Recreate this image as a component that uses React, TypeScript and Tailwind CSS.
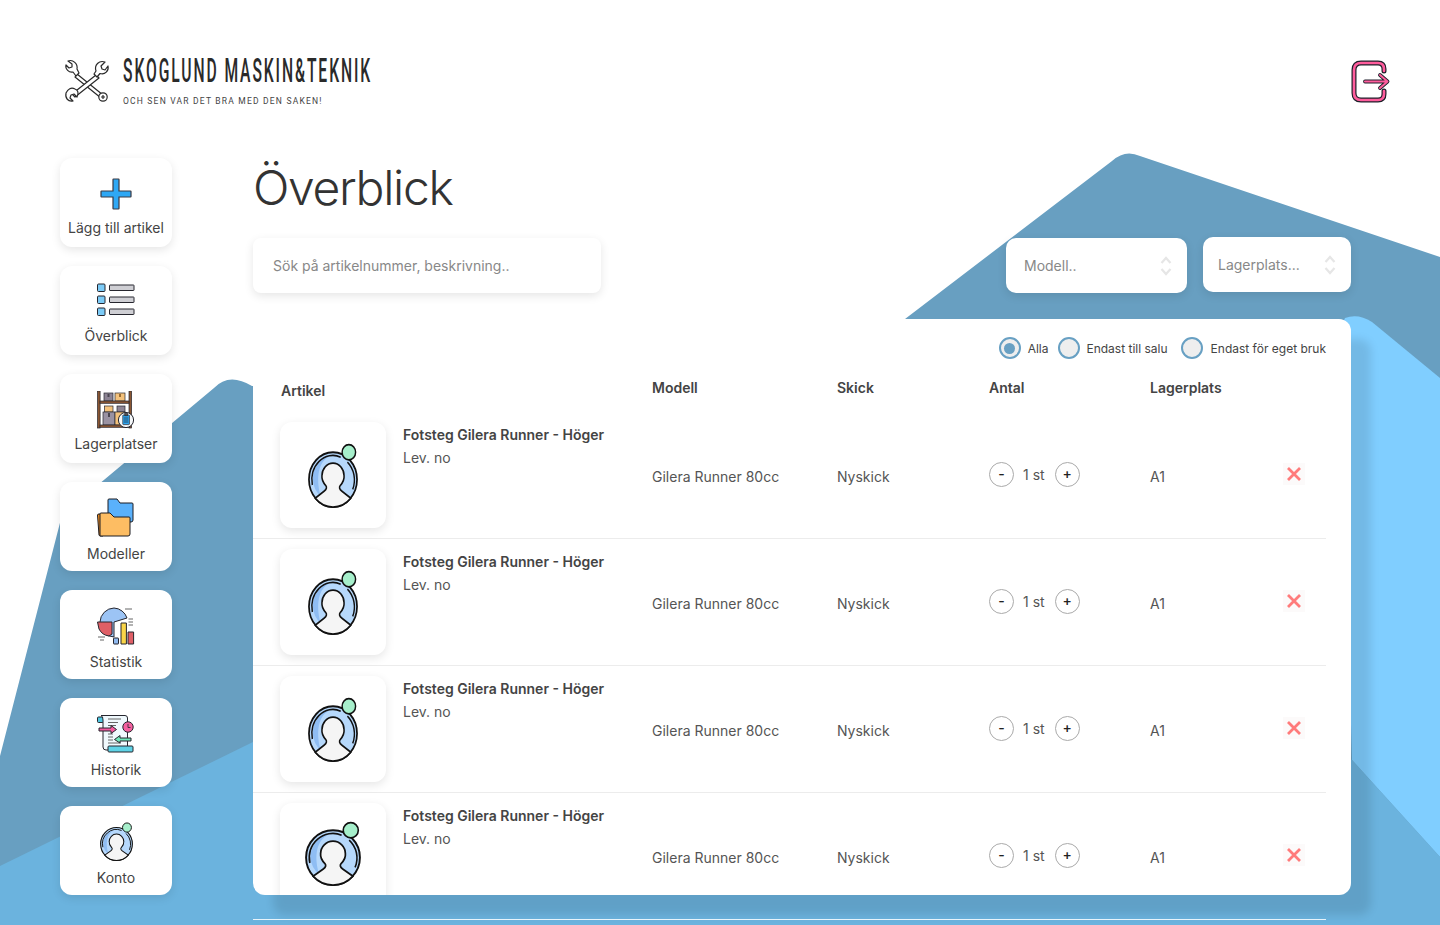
import React from "react";

const INK = "#2a2a2a";

function Background() {
  return (
    <svg className="absolute inset-0 h-[925px] w-[1440px]" viewBox="0 0 1440 925" aria-hidden="true">
      <path d="M0 756 L62 515 L214 388 Q229 372 252 386 L905 387 L905 319 L1112 161 Q1125 149 1140 156 L1440 257 V925 H0 Z" fill="#689fc1" />
      <path d="M1340 330 L1345 318 Q1358 313 1372 322 L1440 378 V857 L1352 760 Z" fill="#80ceff" />
      <path d="M0 866 L253 742 L800 500 L1352 760 L1440 857 V925 H0 Z" fill="#6bb3de" />
    </svg>
  );
}

function LogoMark() {
  return (
    <svg width="46" height="46" viewBox="0 0 46 46" fill="#fff" stroke={INK} strokeWidth="1.2" strokeLinejoin="round">
      <path d="M13 16 L39 37 L37 40 L11 19 Z" />
      <path d="M32 17 L35 20 L11 39 L8 36 Z" />
      <path d="M41 4 L37 8 L38 11 L41 12 L44 8 C45 13 41 17 36 15.5 L33 19 L30 16 L32 13 C30 7 35 2 41 4 Z" />
      <path d="M2 35 C1 40 4 44 9 43 L6 40 L7 37 L10 36 L13 39 C15 35 14 32 11 31 C7 29 4 31 2 35 Z" />
      <path d="M4 3 L8 6 L8 9 L5 10 L2 7 C1 11 5 15 9 14 L12 18 L15 15 L13 11 C14 6 9 1 4 3 Z" />
      <circle cx="39" cy="39" r="4.2" />
      <path d="M37 39 H41 M39 37 V41" />
    </svg>
  );
}

function Logout() {
  const shape = "M34 13 V11 Q34 5 28 5 H11 Q4 5 4 12 V35 Q4 42 11 42 H28 Q34 42 34 36 V33";
  const arrow = "M15 23.5 H37 M30 17 L37.5 23.5 L30 30";
  return (
    <svg width="42" height="46" viewBox="0 0 42 46" fill="none" strokeLinecap="round" strokeLinejoin="round">
      <path d={shape} stroke="#1f1f2a" strokeWidth="5" />
      <path d={arrow} stroke="#1f1f2a" strokeWidth="3.8" />
      <path d={shape} stroke="#ff5c9c" strokeWidth="2.6" />
      <path d={arrow} stroke="#ff5c9c" strokeWidth="2" />
    </svg>
  );
}

function Avatar({ width, height, className }: { width: number; height: number; className?: string }) {
  return (
    <svg width={width} height={height} viewBox="0 0 52 64" preserveAspectRatio="none" className={`block shrink-0 ${className ?? ""}`}>
      <circle cx="26" cy="38" r="25" fill="#b6d8fb" />
      <path d="M5 38 A21 21 0 0 1 22 17 C11 22 8 36 13 53 A21 21 0 0 1 5 38 Z" fill="#8fbdf3" />
      <path d="M4.5 43 A22 22 0 0 1 34 17.5 M41 22 A22 22 0 0 1 46.5 47" fill="none" stroke="#111" strokeWidth="1.5" />
      <circle cx="26" cy="38" r="25" fill="none" stroke="#111" strokeWidth="1.8" />
      <path d="M7.5 55 L17 48.5 Q20.5 46 18.5 43.5 Q14 39 14.5 34.5 A11.5 11.5 0 0 1 37.5 34.5 Q38 39 33.5 43.5 Q31.5 46 35 48.5 L44.5 55 A25 25 0 0 1 7.5 55 Z" fill="#f5f5f5" stroke="#111" strokeWidth="1.6" />
      <circle cx="42.5" cy="13" r="7" fill="#a6efcb" stroke="#111" strokeWidth="1.5" />
    </svg>
  );
}

function IconPlus() {
  return (
    <svg width="38" height="38" viewBox="0 -1 38 38" className="block overflow-visible">
      <path d="M16 3.5 Q16 3 16.5 3 H21.5 Q22 3 22 3.5 V15 H33.5 Q34 15 34 15.5 V20.5 Q34 21 33.5 21 H22 V32.5 Q22 33 21.5 33 H16.5 Q16 33 16 32.5 V21 H4.5 Q4 21 4 20.5 V15.5 Q4 15 4.5 15 H16 Z" fill="#2ea8f5" stroke="#3a3a44" strokeWidth="1.2" />
    </svg>
  );
}

function IconList() {
  const ys = [1, 13, 25];
  return (
    <svg width="38" height="38" viewBox="0 0 38 38" className="block" stroke="#26262e" strokeWidth="1">
      {ys.map((y) => (
        <g key={y}>
          <rect x="0.5" y={y} width="7.5" height="7.5" rx="1" fill="#7ccbf7" />
          <rect x="12.5" y={y + 1} width="24.5" height="5.5" rx="0.5" fill="#cfcfd4" />
        </g>
      ))}
    </svg>
  );
}

function IconShelf() {
  return (
    <svg width="38" height="38" viewBox="0 0 38 38" className="block" stroke="#26262e" strokeWidth="0.7">
      <rect x="7" y="2" width="9" height="8" fill="#8d8494" />
      <rect x="18" y="2" width="10" height="8" fill="#f4c27c" />
      <rect x="7.5" y="15" width="8.5" height="6" fill="#f4c27c" />
      <rect x="20" y="15" width="8" height="6" fill="#8d8494" />
      <rect x="6" y="21" width="12" height="13" fill="#9a92a2" />
      <rect x="18" y="21" width="10" height="13" fill="#f4c27c" />
      <rect x="10.5" y="3" width="2" height="3" fill="#4b4650" stroke="none" />
      <rect x="22" y="3" width="2" height="3" fill="#9a6d32" stroke="none" />
      <rect x="11" y="22" width="2" height="4" fill="#4b4650" stroke="none" />
      <rect x="0.5" y="0" width="2.6" height="37" fill="#8a5632" />
      <rect x="32" y="0" width="2.6" height="37" fill="#8a5632" />
      <rect x="3" y="10" width="29" height="2.3" fill="#8a5632" />
      <rect x="3" y="34" width="29" height="2.3" fill="#8a5632" />
      <circle cx="29" cy="29" r="7.6" fill="#f5f8fa" strokeWidth="1" />
      <rect x="25.8" y="24" width="6.6" height="9.6" rx="0.6" fill="#2ea8f5" />
      <path d="M27 27 H31.2 M27 29 H31.2 M27 31 H31.2" strokeWidth="0.7" />
      <rect x="27.8" y="22.6" width="2.6" height="2.2" fill="#555" />
    </svg>
  );
}

function IconFolder() {
  return (
    <svg width="38" height="38" viewBox="0 0 38 38" className="block overflow-visible" stroke="#1d1d22" strokeWidth="1" strokeLinejoin="round">
      <path d="M11 19 V1 Q11 0 12 0 H20 L23 4 H35 Q36 4 36 5 V21 Q36 23 34 23 H20 Z" fill="#5ab1fb" />
      <path d="M0.5 16 Q0.5 15 2 15 H6 V37 H4 Q2 37 2 36 Z" fill="#f08c1d" />
      <path d="M3 37 V15 Q3 14 4 14 H13 L17 18 H32 Q33 18 33 19 V35 Q33 37 31 37 Z" fill="#fdbd63" />
    </svg>
  );
}

function IconStats() {
  return (
    <svg width="38" height="38" viewBox="0 0 38 38" className="block" stroke="#26262e" strokeWidth="1" strokeLinejoin="round">
      <path d="M17 1 A14.5 14.5 0 0 1 30 11 L17 15 V30 A14.5 14.5 0 0 1 3 15 A14.5 14.5 0 0 1 17 1 Z" fill="#9cc4f5" />
      <path d="M0.5 15 H15 V27 L12 29 A13 13 0 0 1 2 22 Z" fill="#df5f66" />
      <rect x="16.5" y="31" width="5" height="6" rx="0.5" fill="#8fb9ef" />
      <rect x="24" y="16" width="5.4" height="21" fill="#f9d548" />
      <rect x="31" y="25" width="5.6" height="12" fill="#df5f66" />
      <path d="M28 2 H35 M31.5 12 H36 M31.5 15 H36 M31.5 18 H36 M1 30 H8 M3 33 H7" strokeWidth="0.9" fill="none" stroke="#555" />
    </svg>
  );
}

function IconHistory() {
  return (
    <svg width="38" height="38" viewBox="0 -2 38 38" className="block overflow-visible" stroke="#26262e" strokeWidth="1" strokeLinejoin="round">
      <rect x="0.5" y="0" width="6" height="5.5" rx="1" fill="#4fc7e0" />
      <path d="M4 -1.5 H28 Q30.5 -1.5 30.5 1 V33 H9 Q6 33 6 30 V3 Q6 -1 4 -1.5 Z" fill="#f0f9fd" />
      <path d="M11 2 H24 M11 5.5 H21 M11 8.5 H19 M11 17 H16 M11 20 H16 M11 23 H16 M11 26 H24" fill="none" stroke="#555" strokeWidth="0.9" />
      <rect x="11" y="29" width="25" height="6" rx="1" fill="#5fd3e6" />
      <path d="M2 11 H14 V8.5 L19.5 12.5 L14 16.5 V14 H2 Z" fill="#f45a9f" />
      <path d="M34 21 H23 V18.5 L17.5 22.5 L23 26 V24 H34 Z" fill="#6fe7b8" />
      <circle cx="31" cy="10" r="5.2" fill="#f4609f" />
      <path d="M31 7 V10.5 H33.5" fill="none" strokeWidth="0.8" />
    </svg>
  );
}

function IconKonto() {
  return (
    <div className="flex h-[38px] w-[38px] justify-center">
      <Avatar width={33} height={42} className="-mt-[4px]" />
    </div>
  );
}

const navItems = [
  { label: "Lägg till artikel", icon: <IconPlus />, box: "h-[43px]" },
  { label: "Överblick", icon: <IconList />, box: "h-[43px]" },
  { label: "Lagerplatser", icon: <IconShelf />, box: "h-[43px]" },
  { label: "Modeller", icon: <IconFolder />, box: "h-[45px]" },
  { label: "Statistik", icon: <IconStats />, box: "h-[45px]" },
  { label: "Historik", icon: <IconHistory />, box: "h-[45px]" },
  { label: "Konto", icon: <IconKonto />, box: "h-[45px]" },
];

function Chevrons({ className }: { className: string }) {
  return (
    <svg width="12" height="20" viewBox="0 0 12 20" fill="none" stroke="#e6e6e6" strokeWidth="2.2" className={className}>
      <path d="M1.5 7 L6 2 L10.5 7 M1.5 13 L6 18 L10.5 13" />
    </svg>
  );
}

function Radio({ label, checked, className, labelClass }: { label: string; checked?: boolean; className: string; labelClass: string }) {
  return (
    <div className={`flex items-center ${className}`}>
      <span className="flex h-[22px] w-[22px] items-center justify-center rounded-full border-2 border-[#68a0c3] bg-[#eeeeee]">
        {checked && <span className="h-[11px] w-[11px] rounded-full bg-[#68a0c3]" />}
      </span>
      <span className={`mt-[2px] text-xs text-[#444444] ${labelClass}`}>{label}</span>
    </div>
  );
}

function RoundButton({ children }: { children: React.ReactNode }) {
  return (
    <span className="flex h-[25px] w-[25px] items-center justify-center rounded-full border border-[#aaaaaa] pb-[2px] text-sm leading-none font-medium text-[#222222]">
      {children}
    </span>
  );
}

function Row({ large }: { large?: boolean }) {
  return (
    <div className="grid h-[127px] w-[1073px] grid-cols-[123px_249px_185px_152px_161px_133px_22px] border-b border-[#ececec] pl-[27px] text-sm text-[#555555]">
      <div className={`mt-[10px] flex h-[106px] w-[106px] justify-center rounded-xl bg-white shadow-[0_3px_10px_rgba(0,0,0,0.1)] ${large ? "pt-[13px]" : "pt-[16px]"}`}>
        <Avatar width={large ? 56 : 50} height={70} />
      </div>
      <div className="mt-[13px] flex flex-col gap-[3px]">
        <span className="font-semibold text-[#444444]">Fotsteg Gilera Runner - Höger</span>
        <span>Lev. no</span>
      </div>
      <span className="mt-[55px]">Gilera Runner 80cc</span>
      <span className="mt-[55px]">Nyskick</span>
      <div className="mt-[50px] flex h-[25px] items-center">
        <RoundButton>-</RoundButton>
        <span className="ml-[9px] mr-[10px]">1 st</span>
        <RoundButton>+</RoundButton>
      </div>
      <span className="mt-[55px]">A1</span>
      <div className="mt-[51px] flex h-[22px] w-[22px] items-center justify-center bg-[#fcfafa]">
        <svg width="16" height="16" viewBox="0 0 16 16" stroke="#ff7b7b" strokeWidth="2.8" className="block">
          <path d="M2 2 L14 14 M14 2 L2 14" />
        </svg>
      </div>
    </div>
  );
}

export default function App() {
  return (
    <div className="relative h-[925px] w-full overflow-hidden bg-white font-['Inter',sans-serif]">
      <Background />
      <div className="relative">
        <header className="flex h-[158px] items-start justify-between pl-[64px] pr-[48px]">
          <div className="mt-[58px] flex">
            <LogoMark />
            <div className="ml-[13px] font-['Roboto',sans-serif] text-[#2a2a2a]">
              <div className="h-[30px] w-[250px] origin-left scale-x-[0.475] whitespace-nowrap text-[33px] leading-[26px] font-medium tracking-[4.0px]">
                SKOGLUND MASKIN&amp;TEKNIK
              </div>
              <div className="mt-[7px] h-[12px] whitespace-nowrap text-[8.5px] leading-[12px] tracking-[1.2px] text-[#444444]">
                OCH SEN VAR DET BRA MED DEN SAKEN!
              </div>
            </div>
          </div>
          <div className="mt-[58px]">
            <Logout />
          </div>
        </header>

        <div className="flex pl-[60px]">
          <nav className="flex w-[112px] flex-col gap-[19px]">
            {navItems.map((item) => (
              <div
                key={item.label}
                className="flex h-[89px] flex-col items-center rounded-xl bg-white pt-[17px] shadow-[0_3px_10px_rgba(0,0,0,0.1)]"
              >
                <div className={item.box}>{item.icon}</div>
                <span className="whitespace-nowrap text-sm leading-5 text-[#444444]">{item.label}</span>
              </div>
            ))}
          </nav>

          <main className="ml-[81px] w-[1098px]">
            <h1 className="mt-px h-[58px] text-5xl leading-[58px] font-light tracking-[-1.3px] text-[#333333]">Överblick</h1>
            <div className="mt-[21px] flex h-[56px] items-start justify-between">
              <div className="flex h-[55px] w-[348px] items-center rounded-lg bg-white pl-5 text-sm text-[#888888] shadow-[0_3px_10px_rgba(0,0,0,0.1)]">
                Sök på artikelnummer, beskrivning..
              </div>
              <div className="flex gap-4">
                <div className="flex h-[55px] w-[181px] items-center justify-between rounded-[10px] bg-white pl-[18px] pr-[15px] text-sm text-[#888888] shadow-[0_3px_10px_rgba(0,0,0,0.1)]">
                  Modell..
                  <Chevrons className="block" />
                </div>
                <div className="-mt-px flex h-[55px] w-[148px] items-center justify-between rounded-[10px] bg-white pl-[15px] pr-[15px] text-sm text-[#888888] shadow-[0_3px_10px_rgba(0,0,0,0.1)]">
                  Lagerplats...
                  <Chevrons className="block" />
                </div>
              </div>
            </div>

            <div className="mt-[25px] h-[576px] w-[1098px] overflow-hidden rounded-xl bg-white shadow-[20px_20px_8px_rgba(0,0,0,0.1)]">
              <div className="flex h-[40px] items-start justify-end pr-[25px] pt-[18px]">
                <Radio label="Alla" checked className="mr-[10px]" labelClass="ml-[7px]" />
                <Radio label="Endast till salu" className="mr-[13px]" labelClass="ml-[6px]" />
                <Radio label="Endast för eget bruk" className="" labelClass="ml-[8px]" />
              </div>
              <div className="grid h-[53px] w-[1073px] grid-cols-[372px_185px_152px_161px_1fr] pl-[27px] text-sm font-semibold text-[#444444]">
                <span className="pl-px pt-[22px]">Artikel</span>
                <span className="pt-[19px]">Modell</span>
                <span className="pt-[19px]">Skick</span>
                <span className="pt-[19px]">Antal</span>
                <span className="pt-[19px]">Lagerplats</span>
              </div>
              <Row />
              <Row />
              <Row />
              <Row large />
            </div>
            <div className="mt-[24px] h-px w-[1073px] bg-[#e8f4fb]" />
          </main>
        </div>
      </div>
    </div>
  );
}
